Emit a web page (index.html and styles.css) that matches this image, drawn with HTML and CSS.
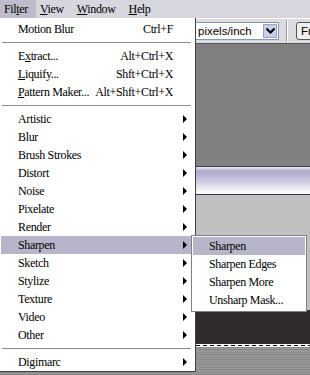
FILE: index.html
```html
<!DOCTYPE html>
<html>
<head>
  <title>Filter menu</title>
  <link rel="stylesheet" href="styles.css">
</head>
<body>
  <div class="screen">
    <div class="menubar">
      <span class="mb-item open">Fil<u>t</u>er</span>
      <span class="mb-item"><u>V</u>iew</span>
      <span class="mb-item"><u>W</u>indow</span>
      <span class="mb-item"><u>H</u>elp</span>
    </div>
    <div class="toolbar">
      <div class="select">
        <span class="select-text">pixels/inch</span>
        <span class="select-drop">
          <svg width="9" height="6" viewBox="0 0 9 6"><path d="M0.5 0.5 L4.5 4.5 L8.5 0.5" fill="none" stroke="#000" stroke-width="2"/></svg>
        </span>
      </div>
      <div class="tool-sep"></div>
      <div class="tool-btn">Fr</div>
    </div>
    <div class="pane-gray"></div>
    <div class="band"></div>
    <div class="pane-light"></div>
    <div class="pane-dark"></div>
    <div class="marquee"></div>
    <div class="texture"></div>

    <div class="menu">
      <div class="item"><span>Motion Blur</span><span class="key">Ctrl+F</span><span></span></div>
      <div class="sep"></div>
      <div class="item"><span>E<u>x</u>tract...</span><span class="key">Alt+Ctrl+X</span><span></span></div>
      <div class="item"><span><u>L</u>iquify...</span><span class="key">Shft+Ctrl+X</span><span></span></div>
      <div class="item"><span><u>P</u>attern Maker...</span><span class="key">Alt+Shft+Ctrl+X</span><span></span></div>
      <div class="sep"></div>
      <div class="item sub"><span>Artistic</span><span></span><span class="arrow"></span></div>
      <div class="item sub"><span>Blur</span><span></span><span class="arrow"></span></div>
      <div class="item sub"><span>Brush Strokes</span><span></span><span class="arrow"></span></div>
      <div class="item sub"><span>Distort</span><span></span><span class="arrow"></span></div>
      <div class="item sub"><span>Noise</span><span></span><span class="arrow"></span></div>
      <div class="item sub"><span>Pixelate</span><span></span><span class="arrow"></span></div>
      <div class="item sub"><span>Render</span><span></span><span class="arrow"></span></div>
      <div class="item sub active"><span>Sharpen</span><span></span><span class="arrow"></span></div>
      <div class="item sub"><span>Sketch</span><span></span><span class="arrow"></span></div>
      <div class="item sub"><span>Stylize</span><span></span><span class="arrow"></span></div>
      <div class="item sub"><span>Texture</span><span></span><span class="arrow"></span></div>
      <div class="item sub"><span>Video</span><span></span><span class="arrow"></span></div>
      <div class="item sub"><span>Other</span><span></span><span class="arrow"></span></div>
      <div class="sep"></div>
      <div class="item sub"><span>Digimarc</span><span></span><span class="arrow"></span></div>
    </div>

    <div class="submenu">
      <div class="sub-item active">Sharpen</div>
      <div class="sub-item">Sharpen Edges</div>
      <div class="sub-item">Sharpen More</div>
      <div class="sub-item">Unsharp Mask...</div>
    </div>
  </div>
</body>
</html>
```

FILE: styles.css
```css
body { margin: 0; background: #c0c0c0; }
.screen {
  position: relative;
  width: 310px; height: 375px;
  overflow: hidden;
  display: flex; flex-direction: column;
  font-family: 'Liberation Serif', 'Times New Roman', serif;
  font-size: 12px; letter-spacing: -0.35px; color: #000;
}

/* background window */
.menubar {
  height: 18px; flex: none;
  display: flex; align-items: center;
  background: #d6d6de;
}
.mb-item { height: 18px; line-height: 18px; padding: 0 4px; margin-right: 5px; }
.mb-item.open { background: #bdbccc; padding-right: 8px; margin-right: 0; }

.toolbar {
  height: 26px; flex: none;
  display: flex; align-items: center;
  background: #dcdce0;
  border-top: 1px solid #fff;
  border-bottom: 1px solid #555;
  box-sizing: border-box;
  padding-left: 192px;
  font-family: 'Liberation Sans', Arial, sans-serif; font-size: 11.5px; letter-spacing: 0;
}
.toolbar > * { flex: none; }
.select {
  width: 87px; height: 18px;
  display: flex; align-items: center; justify-content: space-between;
  background: #fff; border: 1px solid #7f9db9;
  box-sizing: border-box; padding: 0 1px 0 5px;
}
.select-drop {
  width: 14px; height: 14px;
  display: flex; align-items: center; justify-content: center;
  background: #c9cde8; border: 1px solid #9aa3c8; box-sizing: border-box;
}
.tool-sep { width: 1px; height: 22px; margin: 0 8px 0 7px; background: #9a9a9a; border-right: 1px solid #fff; }
.tool-btn {
  height: 16px; line-height: 16px; padding: 0 6px 0 4px;
  border: 1px solid #555; border-radius: 3px; background: #f0f0f0;
}

.pane-gray { height: 122px; flex: none; background: #808080; border-bottom: 1px solid #3c3c50; }
.band {
  height: 27px; flex: none;
  background: linear-gradient(#eeeef6 0, #aeaacc 4px, #c4c2da 12px, #f4f4f8 24px, #fff 27px);
  border-bottom: 1px solid #34344a;
}
.pane-light { height: 115px; flex: none; background: #c0c0c0; }
.pane-dark { height: 34px; flex: none; background: #2f2b2b; border-bottom: 1px solid #fff; }
.marquee {
  height: 1px; flex: none;
  background: repeating-linear-gradient(90deg, #000 0 4px, #fff 4px 7px);
  border-bottom: 1px solid #fff;
}
.texture {
  flex: 1;
  background: repeating-linear-gradient(#8a8a8a 0 1px, #9a9a9a 1px 2px, #858585 2px 3px, #979797 3px 5px);
}

/* dropdown menu */
.menu {
  position: absolute; left: 0; top: 18px;
  width: 196px; height: 354px; box-sizing: border-box;
  background: #fff;
  border-right: 1px solid #404040;
  border-bottom: 1px solid #404040;
  padding: 2px 4px 0 1px;
}
.item {
  height: 18px; line-height: 18px;
  display: grid; grid-template-columns: 1fr auto 18px;
  padding-left: 17px;
  white-space: nowrap;
}
.item.active, .sub-item.active { background: #b7b5ca; }
.key { text-align: right; padding-left: 4px; }
.arrow {
  width: 0; height: 0; margin: 5px 0 0 10px;
  border-top: 4px solid transparent; border-bottom: 4px solid transparent;
  border-left: 4px solid #000;
}
.sep { height: 1px; margin: 4px 0 3px 1px; background: #8c8c8c; border-bottom: 1px solid #fff; }

.submenu {
  position: absolute; left: 191px; top: 235px;
  width: 116px; box-sizing: border-box;
  background: #fff;
  border: 1px solid #808080;
  padding: 1px 1px 2px;
}
.sub-item { height: 18px; line-height: 18px; padding-left: 16px; white-space: nowrap; }
```
